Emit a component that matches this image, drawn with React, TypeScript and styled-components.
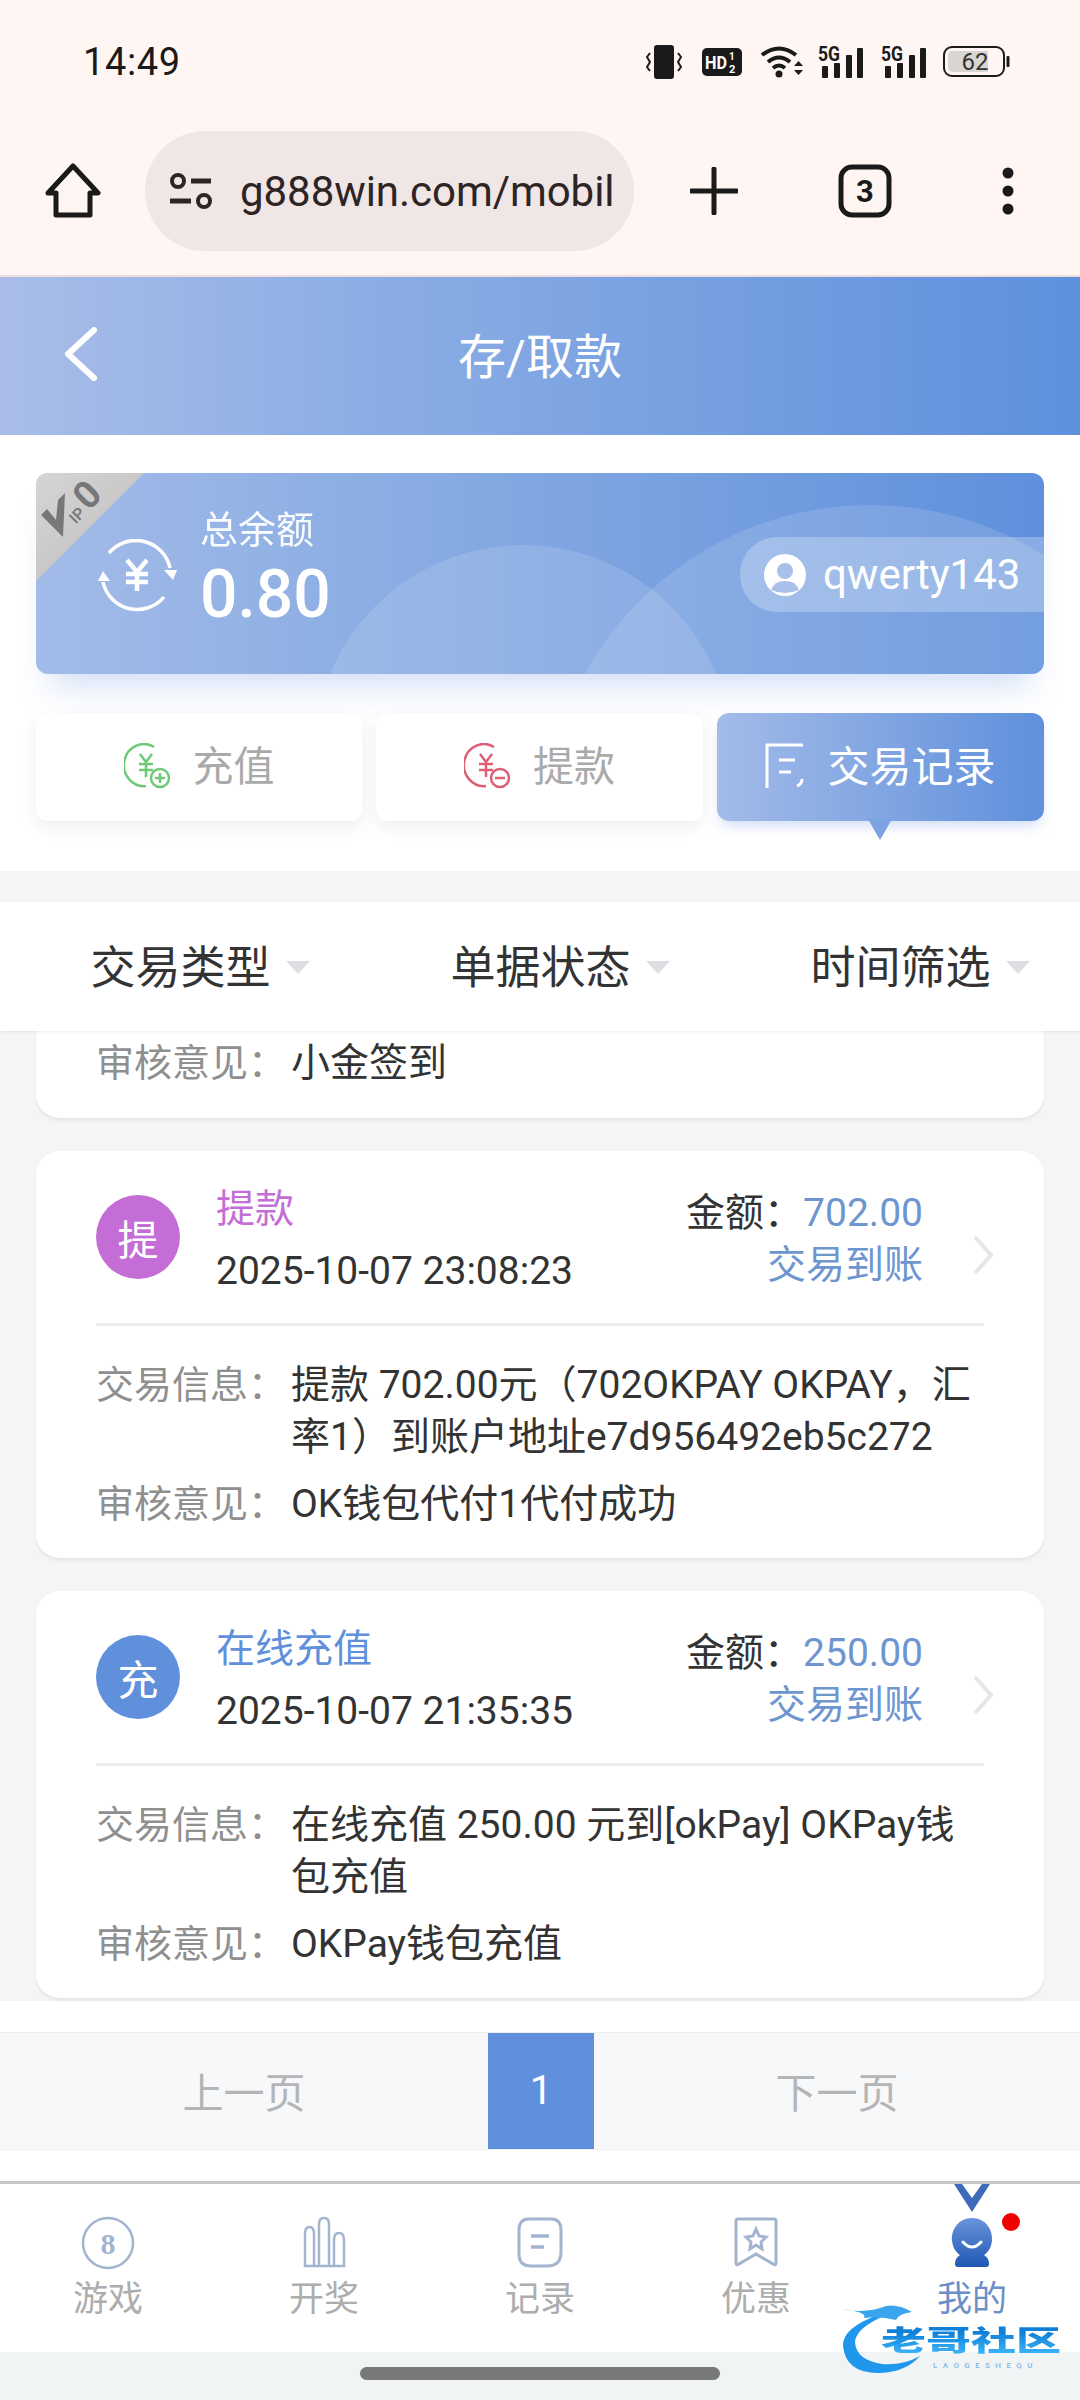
import React from "react";
import styled, { createGlobalStyle } from "styled-components";

const Global = createGlobalStyle`
  html, body { margin: 0; padding: 0; background: #fff; }
  body { font-family: Roboto, "Noto Sans CJK SC", sans-serif; }
  * { box-sizing: border-box; }
`;

const Page = styled.div`
  width: 1080px; height: 2400px; position: relative; overflow: hidden;
  display: flex; flex-direction: column; background: #fff;
`;
const StatusBar = styled.div`
  height: 110px; background: #fff6f3; padding: 13px 70px 0 83px;
  display: flex; align-items: center; justify-content: space-between;
`;
const Clock = styled.span`font-size: 38px; color: #1a1a1a; letter-spacing: 0.6px;`;
const StatusIcons = styled.div`display: flex; align-items: center;`;
const StatusGap = styled.span<{ $w: number }>`width: ${p => p.$w}px; flex: none;`;
const SignalSvg = styled.svg`margin-top: -8px; flex: none;`;
const BrowserBar = styled.div`
  height: 167px; background: #fff6f3; border-bottom: 2px solid #efdedd;
  display: flex; align-items: center; padding-bottom: 3px;
`;
const IconSlot = styled.div<{ $w: number }>`
  width: ${p => p.$w}px; display: flex; justify-content: center; align-items: center; flex: none;
`;
const UrlPill = styled.div`
  width: 489px; height: 120px; border-radius: 60px; background: #f0e6e5; flex: none;
  display: flex; align-items: center; padding-left: 24px; gap: 27px;
`;
const UrlText = styled.div`white-space: nowrap; font-size: 42px; color: #2d2424; letter-spacing: -0.05px;`;
const Header = styled.div`
  height: 158px; background: linear-gradient(90deg, #a9bde8 0%, #8bade4 35%, #5e90dc 100%);
  display: flex; align-items: center; justify-content: center; position: relative; padding-bottom: 7px;
`;
const BackIcon = styled.svg`position: absolute; left: 62px; top: 50px;`;
const HeaderTitle = styled.div`font-size: 48px; color: #fff;`;
const BalanceSection = styled.div`
  height: 436px; background: #fff; padding: 38px 36px 0; display: flex; flex-direction: column; gap: 39px;
`;
const CardShadowWrap = styled.div`
  border-radius: 12px; box-shadow: 0 26px 30px -14px rgba(110,150,225,0.3); flex: none;
`;
const BalanceCard = styled.div`
  height: 201px; border-radius: 12px; position: relative; overflow: hidden;
  background: linear-gradient(90deg, #a3bbe8 0%, #8aade3 35%, #5f90dc 100%);
  display: flex; align-items: center; justify-content: space-between; padding-left: 61px;
`;
const Arc = styled.div<{ $left: number; $top: number; $size: number }>`
  position: absolute; left: ${p => p.$left}px; top: ${p => p.$top}px;
  width: ${p => p.$size}px; height: ${p => p.$size}px; border-radius: 50%;
  background: rgba(255,255,255,0.13);
`;
const Ribbon = styled.svg`position: absolute; left: 0; top: 0;`;
const BalanceLeft = styled.div`display: flex; align-items: center; gap: 23px; position: relative; margin-top: 4px;`;
const BalanceTexts = styled.div`display: flex; flex-direction: column; margin-top: -12px;`;
const BalanceLabel = styled.div`font-size: 38px; line-height: 50px; color: #fff; opacity: .95;`;
const BalanceValue = styled.div`font-size: 66px; line-height: 80px; font-weight: 500; color: #fff;`;
const UserPill = styled.div`
  width: 304px; height: 75px; margin-top: 2px; background: rgba(255,255,255,.26); position: relative;
  border-radius: 37px 0 0 37px; display: flex; align-items: center; padding-left: 24px; gap: 17px;
  font-size: 42px; color: #fff;
`;
const ActionRow = styled.div`display: grid; grid-template-columns: 326px 327px 327px; column-gap: 14px; flex: none;`;
const ActionBtn = styled.div<{ $active?: boolean }>`
  height: 108px; border-radius: 12px; display: flex; align-items: center; justify-content: center;
  position: relative; font-size: ${p => (p.$active ? 42 : 41)}px; gap: 22px; padding-bottom: 8px;
  color: ${p => (p.$active ? "#fff" : "#aaaaaa")};
  background: ${p => (p.$active ? "linear-gradient(90deg,#a3bbe8,#5f90dc)" : "#fff")};
  box-shadow: ${p => (p.$active ? "0 8px 14px -4px rgba(110,150,225,.35)" : "0 6px 18px rgba(0,0,0,.07)")};
`;
const ActionIcon = styled.svg`margin-top: 6px; flex: none;`;
const Pointer = styled.div`
  position: absolute; left: 151px; top: 106px; width: 0; height: 0;
  border-left: 12px solid transparent; border-right: 12px solid transparent; border-top: 21px solid #7ba3e2;
`;
const Gap = styled.div`height: 31px; background: #f5f5f5;`;
const FilterBar = styled.div`
  height: 129px; background: #fff; display: grid; grid-template-columns: repeat(3, 360px); padding-left: 20px;
  box-shadow: 0 1px 3px rgba(0,0,0,.08); position: relative; z-index: 1; margin-right: -20px;
`;
const FilterItem = styled.div`
  display: flex; align-items: center; justify-content: center; gap: 15px; font-size: 45px; color: #333; padding-bottom: 4px;
`;
const Caret = styled.span`
  width: 0; height: 0; border-left: 12px solid transparent; border-right: 12px solid transparent;
  border-top: 13px solid #dcdee2; margin-top: 6px;
`;
const List = styled.div`
  height: 970px; background: #f5f5f5; padding: 0 36px; display: flex; flex-direction: column; gap: 33px;
`;
const Card = styled.div<{ $partial?: boolean }>`
  background: #fff; border-radius: ${p => (p.$partial ? "0 0 24px 24px" : "24px")};
  box-shadow: 0 3px 3px rgba(0,0,0,.06); padding: ${p => (p.$partial ? "6px 60px 0" : "0 60px")};
  height: ${p => (p.$partial ? 87 : 407)}px; flex: none;
`;
const CardTop = styled.div`
  height: 175px; border-bottom: 3px solid #eeeeee; display: flex; align-items: flex-start; position: relative;
`;
const Avatar = styled.div<{ $c: string }>`
  width: 84px; height: 84px; border-radius: 50%; background: ${p => p.$c}; color: #fff; margin-top: 44px;
  display: flex; align-items: center; justify-content: center; font-size: 41px; flex: none;
`;
const TopMain = styled.div`margin-left: 36px; padding-top: 34px; flex: 1;`;
const TypeName = styled.div<{ $c: string }>`font-size: 39px; line-height: 48px; color: ${p => p.$c};`;
const DateText = styled.div`font-size: 39px; line-height: 48px; margin-top: 14px; color: #333;`;
const TopRight = styled.div`
  margin-right: 61px; padding-top: 38px; text-align: right; font-size: 39px; color: #333;
`;
const AmountLine = styled.div`line-height: 48px;`;
const Blue = styled.span`color: #6d96cf;`;
const StatusLine = styled.div`line-height: 48px; margin-top: 4px; color: #6d96cf;`;
const Chevron = styled.svg`position: absolute; right: -10px; top: 84px;`;
const InfoBlock = styled.div`padding-top: 33px; display: flex; flex-direction: column; gap: 15px;`;
const InfoRow = styled.div`display: flex; font-size: 39px; line-height: 52px;`;
const InfoLabel = styled.div`width: 195px; flex: none; color: #8f8f8f; white-space: nowrap; font-size: 38px;`;
const InfoValue = styled.div`color: #333; flex: 1; word-break: break-all;`;
const Pagination = styled.div`
  height: 118px; margin-top: 31px; display: grid; grid-template-columns: 488px 106px 486px;
  background: #f7f8fa; border: solid #efefef; border-width: 1px 0;
`;
const PageLink = styled.div`
  display: flex; align-items: center; justify-content: center; font-size: 41px; color: #b5b5b5; padding-bottom: 2px;
`;
const PageNow = styled.div`
  display: flex; align-items: center; justify-content: center; font-size: 40px; color: #fff; background: #6090dc; padding-bottom: 2px;
`;
const TabBar = styled.div`
  margin-top: 31px; height: 171px; border-top: 3px solid #c6c6c6; background: #fff;
  display: grid; grid-template-columns: repeat(5, 216px); position: relative;
`;
const Tab = styled.div<{ $active?: boolean }>`
  display: flex; flex-direction: column; align-items: center; padding-top: 32px; position: relative;
  font-size: 35px; line-height: 44px; color: ${p => (p.$active ? "#6d8fc8" : "#adadad")};
`;
const TabIcon = styled.svg`display: block; margin-bottom: 8px;`;
const TopNotch = styled.svg`position: absolute; top: 0; left: 90px;`;
const RedDot = styled.span`
  position: absolute; left: 138px; top: 29px; width: 18px; height: 18px; border-radius: 50%; background: #f00000;
`;
const NavBar = styled.div`
  flex: 1; background: #f1f4f5; display: flex; justify-content: center; padding-top: 15px;
`;
const HomePill = styled.div`width: 360px; height: 13px; border-radius: 7px; background: #787878;`;
const Watermark = styled.div`position: absolute; left: 840px; top: 2298px; width: 225px; height: 82px;`;
const WmName = styled.div`
  position: absolute; left: 41px; top: 11px; font-size: 45px; font-weight: 900; line-height: 66px; height: 66px;
  white-space: nowrap; color: #1f97ec; transform: scaleY(0.62);
  background: linear-gradient(180deg, #0f7fd8 25%, #38b0f6 75%); -webkit-background-clip: text; background-clip: text;
  -webkit-text-fill-color: transparent;
`;
const WmSub = styled.div`
  position: absolute; left: 93px; top: 63px; font-size: 8px; letter-spacing: 5.4px; color: #7fb8e8; font-weight: 500; line-height: 9px; white-space: nowrap;
`;
const Dragon = styled.svg`position: absolute; left: 0; top: 0;`;

const C = "#1a1a1a";

function Signal() {
  return (
    <SignalSvg width="46" height="40" viewBox="0 -8 46 40">
      <text x="0" y="15" fontSize="20" fontWeight="700" fontFamily="Roboto" fill={C} textLength="22" lengthAdjust="spacingAndGlyphs">5G</text>
      <rect x="4" y="20" width="6" height="12" rx="1" fill={C} />
      <rect x="16" y="17" width="6" height="15" rx="1" fill={C} />
      <rect x="28" y="9" width="6" height="23" rx="1" fill={C} />
      <rect x="39" y="2" width="6" height="30" rx="1" fill={C} />
    </SignalSvg>
  );
}

function StatusGlyphs() {
  return (
    <StatusIcons>
      <svg width="36" height="34" viewBox="0 0 36 34">
        <rect x="8" y="0" width="20" height="34" rx="3" fill={C} />
        <path d="M4 8 L1 12 L4 17 L1 22 L4 26 M32 8 L35 12 L32 17 L35 22 L32 26" stroke={C} strokeWidth="2" fill="none" />
      </svg>
      <StatusGap $w={20} />
      <svg width="40" height="28" viewBox="0 0 40 28">
        <rect width="40" height="28" rx="5" fill={C} />
        <text x="3" y="21" fontSize="19" fontWeight="700" fontFamily="Roboto" fill="#fff" textLength="22" lengthAdjust="spacingAndGlyphs">HD</text>
        <text x="27" y="12" fontSize="10" fontWeight="700" fontFamily="Roboto" fill="#fff">1</text>
        <text x="27" y="25" fontSize="11" fontWeight="700" fontFamily="Roboto" fill="#fff">2</text>
      </svg>
      <StatusGap $w={18} />
      <svg width="44" height="32" viewBox="0 0 44 32">
        <path d="M2 9 Q19 -4 36 9 M8 16 Q19 7 30 16 M13 22 Q19 17 25 22" stroke={C} strokeWidth="4" fill="none" />
        <circle cx="19" cy="28" r="3.5" fill={C} />
        <path d="M34 20 L38.5 15 L43 20Z M34 24 L43 24 L38.5 29Z" fill={C} />
      </svg>
      <StatusGap $w={14} />
      <Signal />
      <StatusGap $w={17} />
      <Signal />
      <StatusGap $w={16} />
      <svg width="67" height="31" viewBox="0 0 67 31">
        <rect x="1" y="1" width="60" height="29" rx="8" fill="none" stroke={C} strokeWidth="2" />
        <path d="M5 10 Q5 5 10 5 L45 5 L45 26 L10 26 Q5 26 5 21Z" fill="#d9d5d3" />
        <rect x="63.5" y="10" width="3" height="11" rx="1" fill={C} />
        <text x="32" y="24" textAnchor="middle" fontSize="24" fontFamily="Roboto" fill="#333">62</text>
      </svg>
    </StatusIcons>
  );
}

function BrowserIcons() {
  return (
    <BrowserBar>
      <IconSlot $w={145}>
        <svg width="56" height="56" viewBox="0 0 56 56">
          <path d="M28 3 L53 30 L45 30 L45 52 L11 52 L11 30 L3 30 Z" fill="none" stroke={C} strokeWidth="5" strokeLinejoin="round" />
        </svg>
      </IconSlot>
      <UrlPill>
        <svg width="44" height="38" viewBox="0 0 44 38">
          <circle cx="9" cy="9" r="6" fill="none" stroke="#2d2424" strokeWidth="4" />
          <path d="M22 9 H42 M1 29 H22" stroke="#2d2424" strokeWidth="5" />
          <circle cx="35" cy="29" r="6" fill="none" stroke="#2d2424" strokeWidth="4" />
        </svg>
        <UrlText>g888win.com/mobil</UrlText>
      </UrlPill>
      <IconSlot $w={160}>
        <svg width="48" height="48" viewBox="0 0 48 48"><path d="M24 2 V46 M1 24 H47" stroke={C} strokeWidth="5" strokeLinecap="round" /></svg>
      </IconSlot>
      <IconSlot $w={142}>
        <svg width="54" height="54" viewBox="0 0 54 54">
          <rect x="3" y="3" width="48" height="48" rx="11" fill="none" stroke={C} strokeWidth="5" />
          <text x="27" y="38" fontSize="31" fontWeight="700" textAnchor="middle" fontFamily="Roboto" fill={C}>3</text>
        </svg>
      </IconSlot>
      <IconSlot $w={144}>
        <svg width="14" height="48" viewBox="0 0 14 48">
          <circle cx="7" cy="6" r="5.5" fill={C} /><circle cx="7" cy="24" r="5.5" fill={C} /><circle cx="7" cy="42" r="5.5" fill={C} />
        </svg>
      </IconSlot>
    </BrowserBar>
  );
}

function Record(props: {
  letter: string; color: string; type: string; date: string; amount: string; info: string; note: string;
}) {
  return (
    <Card>
      <CardTop>
        <Avatar $c={props.color}>{props.letter}</Avatar>
        <TopMain>
          <TypeName $c={props.color}>{props.type}</TypeName>
          <DateText>{props.date}</DateText>
        </TopMain>
        <TopRight>
          <AmountLine>金额：<Blue>{props.amount}</Blue></AmountLine>
          <StatusLine>交易到账</StatusLine>
        </TopRight>
        <Chevron width="22" height="40" viewBox="0 0 22 40">
          <path d="M3 2 L19 20 L3 38" fill="none" stroke="#e6e6e6" strokeWidth="4" />
        </Chevron>
      </CardTop>
      <InfoBlock>
        <InfoRow><InfoLabel>交易信息：</InfoLabel><InfoValue>{props.info}</InfoValue></InfoRow>
        <InfoRow><InfoLabel>审核意见：</InfoLabel><InfoValue>{props.note}</InfoValue></InfoRow>
      </InfoBlock>
    </Card>
  );
}

const TI = "#a3b4cf";

export default function App() {
  return (
    <Page>
      <Global />
      <StatusBar>
        <Clock>14:49</Clock>
        <StatusGlyphs />
      </StatusBar>
      <BrowserIcons />
      <Header>
        <BackIcon width="36" height="54" viewBox="0 0 36 54">
          <path d="M32 3 L6 27 L32 51" fill="none" stroke="#fff" strokeWidth="6" strokeLinecap="round" strokeLinejoin="round" />
        </BackIcon>
        <HeaderTitle>存/取款</HeaderTitle>
      </Header>
      <BalanceSection>
        <CardShadowWrap>
          <BalanceCard>
            <Arc $left={278} $top={72} $size={418} />
            <Arc $left={509} $top={32} $size={650} />
            <Ribbon width="108" height="108" viewBox="0 0 108 108">
              <defs>
                <linearGradient id="rib" x1="0" y1="0" x2="1" y2="1">
                  <stop offset="0" stopColor="#d5d5d5" /><stop offset="1" stopColor="#bdbdbd" />
                </linearGradient>
              </defs>
              <path d="M0 0 H108 L0 108 Z" fill="url(#rib)" />
              <path d="M5 42 L27 64 L29 20 L22 27 L20 47 L11 36Z" fill="#777" />
              <g transform="rotate(-45 44 36)">
                <text x="30" y="44" fontSize="16" fontWeight="500" fontFamily="Roboto" fill="#777">IP</text>
                <text x="48" y="44" fontSize="38" fontWeight="700" fontFamily="Roboto" fill="#777">0</text>
              </g>
            </Ribbon>
            <BalanceLeft>
              <svg width="80" height="74" viewBox="0 0 80 74" fill="none" stroke="#fff" strokeWidth="3.5">
                <path d="M12 14 A35 35 0 0 1 73 29" />
                <path d="M67 31 L76 41 L80 31Z" fill="#fff" stroke="none" />
                <path d="M67 58 A35 35 0 0 1 6 43" />
                <path d="M1 42 L6 32 L13 42Z" fill="#fff" stroke="none" />
                <path d="M30 21 L40 33 L50 21 M29 35 H51 M29 43 H51 M40 33 V52" strokeWidth="4.5" />
              </svg>
              <BalanceTexts>
                <BalanceLabel>总余额</BalanceLabel>
                <BalanceValue>0.80</BalanceValue>
              </BalanceTexts>
            </BalanceLeft>
            <UserPill>
              <svg width="42" height="42" viewBox="0 0 42 42">
                <circle cx="21" cy="21" r="21" fill="#fff" />
                <circle cx="21" cy="17" r="8" fill="#a8c0ea" />
                <path d="M7 36 Q10 27 21 27 Q32 27 35 36 Q28 39 21 39 Q14 39 7 36Z" fill="#a8c0ea" />
              </svg>
              qwerty143
            </UserPill>
          </BalanceCard>
        </CardShadowWrap>
        <ActionRow>
          <ActionBtn>
            <ActionIcon width="47" height="46" viewBox="0 0 47 46" fill="none" stroke="#6fca78" strokeWidth="2.5">
              <path d="M30 4 A20 21 0 1 0 22 43" />
              <path d="M16 11 L22 19 L28 11 M15 21 H29 M15 27 H29 M22 19 V34" />
              <circle cx="36" cy="35" r="9" />
              <path d="M31 35 H41 M36 30 V40" />
            </ActionIcon>
            充值
          </ActionBtn>
          <ActionBtn>
            <ActionIcon width="47" height="46" viewBox="0 0 47 46" fill="none" stroke="#de6077" strokeWidth="2.5">
              <path d="M30 4 A20 21 0 1 0 22 43" />
              <path d="M16 11 L22 19 L28 11 M15 21 H29 M15 27 H29 M22 19 V34" />
              <circle cx="36" cy="35" r="9" />
              <path d="M31 35 H41" />
            </ActionIcon>
            提款
          </ActionBtn>
          <ActionBtn $active>
            <ActionIcon width="40" height="46" viewBox="0 0 40 46" fill="none" stroke="#fff" strokeWidth="3">
              <path d="M38 2 H2 V45" />
              <path d="M14 17 H30 M14 29 H26 M37 36 Q37 41 32 43" />
            </ActionIcon>
            交易记录
            <Pointer />
          </ActionBtn>
        </ActionRow>
      </BalanceSection>
      <Gap />
      <FilterBar>
        <FilterItem>交易类型<Caret /></FilterItem>
        <FilterItem>单据状态<Caret /></FilterItem>
        <FilterItem>时间筛选<Caret /></FilterItem>
      </FilterBar>
      <List>
        <Card $partial>
          <InfoRow><InfoLabel>审核意见：</InfoLabel><InfoValue>小金签到</InfoValue></InfoRow>
        </Card>
        <Record
          letter="提" color="#c46dd6" type="提款" date="2025-10-07 23:08:23" amount="702.00"
          info="提款 702.00元（702OKPAY OKPAY，汇率1）到账户地址e7d956492eb5c272" note="OK钱包代付1代付成功"
        />
        <Record
          letter="充" color="#6090dc" type="在线充值" date="2025-10-07 21:35:35" amount="250.00"
          info="在线充值 250.00 元到[okPay] OKPay钱包充值" note="OKPay钱包充值"
        />
      </List>
      <Pagination>
        <PageLink>上一页</PageLink>
        <PageNow>1</PageNow>
        <PageLink>下一页</PageLink>
      </Pagination>
      <TabBar>
        <Tab>
          <TabIcon width="54" height="54" viewBox="0 0 54 54">
            <circle cx="27" cy="27" r="25" fill="none" stroke={TI} strokeWidth="2.5" />
            <text x="27" y="38" textAnchor="middle" fontSize="30" fontWeight="700" fontFamily="Liberation Serif" fill={TI}>8</text>
          </TabIcon>
          游戏
        </Tab>
        <Tab>
          <TabIcon width="54" height="54" viewBox="0 0 54 54" fill="none" stroke={TI} strokeWidth="2.5">
            <path d="M8 50 V18 Q8 11 12.5 11 Q17 11 17 18 V50Z M22 50 V8 Q22 2 27 2 Q32 2 32 8 V50Z M37 50 V24 Q37 17 42 17 Q47 17 47 24 V50Z M7 50 H47" />
          </TabIcon>
          开奖
        </Tab>
        <Tab>
          <TabIcon width="54" height="54" viewBox="0 0 54 54" fill="none" stroke={TI} strokeWidth="3">
            <path d="M16 3 H38 Q48 3 48 14 V36 Q48 50 34 50 H18 Q6 50 6 38 V14 Q6 3 16 3Z" />
            <path d="M18 20 H36 M18 31 H31" strokeWidth="3.5" />
          </TabIcon>
          记录
        </Tab>
        <Tab>
          <TabIcon width="54" height="54" viewBox="0 0 54 54" fill="none" stroke={TI} strokeWidth="3">
            <path d="M9 3 H45 Q47 3 47 5 V47 Q47 50 44 48 L27 38 L10 48 Q7 50 7 47 V5 Q7 3 9 3Z" />
            <path d="M27 13 L30 20 L37 21 L32 26 L33 33 L27 29 L21 33 L22 26 L17 21 L24 20Z" />
          </TabIcon>
          优惠
        </Tab>
        <Tab $active>
          <TopNotch width="36" height="28" viewBox="0 0 36 28">
            <path d="M0 0 H8 L18 14 L28 0 H36 L18 28Z" fill="#3e6cba" />
          </TopNotch>
          <RedDot />
          <TabIcon width="54" height="54" viewBox="0 0 54 54">
            <defs>
              <linearGradient id="me" x1="0" y1="0" x2="0" y2="1">
                <stop offset="0" stopColor="#6a94dc" /><stop offset="1" stopColor="#2058b4" />
              </linearGradient>
            </defs>
            <path d="M27 2 C40 2 48 13 47 25 C46 33 42 37 39 39 Q44 42 44 48 Q44 51 41 51 H13 Q10 51 10 48 Q10 42 15 39 C12 37 8 33 7 25 C6 13 14 2 27 2Z" fill="url(#me)" />
            <path d="M18 26 Q27 36 36 26" fill="none" stroke="#fff" strokeWidth="3" strokeLinecap="round" />
          </TabIcon>
          我的
        </Tab>
      </TabBar>
      <NavBar><HomePill /></NavBar>
      <Watermark>
        <Dragon width="225" height="82" viewBox="0 0 225 82">
          <path d="M38 17 Q2 30 3 48 Q6 76 40 75 Q66 74 80 58 Q62 68 42 66 Q16 62 15 44 Q16 30 44 18Z" fill="#1f97ec" />
          <path d="M2 11 Q26 16 46 8 Q58 6 72 14 Q58 16 56 22 Q40 18 24 20 Q28 14 2 11Z" fill="#3aa5ee" />
        </Dragon>
        <WmName>老哥社区</WmName>
        <WmSub>LAOGESHEQU</WmSub>
      </Watermark>
    </Page>
  );
}
